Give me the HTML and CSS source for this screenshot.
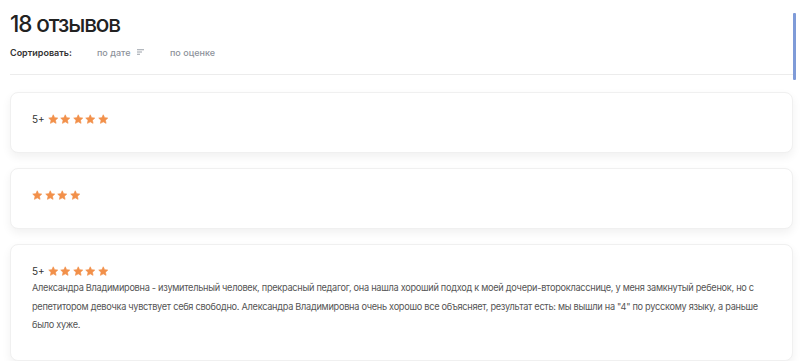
FILE: index.html
```html
<!DOCTYPE html>
<html lang="ru">
<head>
<meta charset="utf-8">
<link rel="stylesheet" href="styles.css">
</head>
<body>
<div class="page">
  <h1 class="title">18 отзывов</h1>
  <div class="sort">
    <span class="sort-label">Сортировать:</span>
    <span class="sort-opt sort-date">по дате
      <svg class="sort-icon" width="7" height="6" viewBox="0 0 7 6"><path d="M0 0.75H7M0 3H5M0 5.25H3" stroke="#9aa0a8" stroke-width="1"/></svg>
    </span>
    <span class="sort-opt">по оценке</span>
  </div>
  <div class="divider"></div>
  <div class="reviews">
    <div class="card">
      <div class="rating"><span class="grade">5+</span><span class="stars" data-n="5"></span></div>
    </div>
    <div class="card">
      <div class="rating"><span class="stars" data-n="4"></span></div>
    </div>
    <div class="card">
      <div class="rating"><span class="grade">5+</span><span class="stars" data-n="5"></span></div>
      <p class="text">Александра Владимировна - изумительный человек, прекрасный педагог, она нашла хороший подход к моей дочери-второкласснице, у меня замкнутый ребенок, но с репетитором девочка чувствует себя свободно. Александра Владимировна очень хорошо все объясняет, результат есть: мы вышли на "4" по русскому языку, а раньше было хуже.</p>
    </div>
  </div>
</div>
<div class="scrollbar"></div>
<script>
document.querySelectorAll('.stars').forEach(function(s){
  var n = +s.dataset.n, h = '';
  for (var i = 0; i < n; i++) h += '<svg class="star" width="10.5" height="10.5" viewBox="0 0 24 24"><path d="M12 1.8l3.1 6.6 7.2.9-5.3 5 1.4 7.1L12 17.9l-6.4 3.5 1.4-7.1-5.3-5 7.2-.9z" fill="#f2904a" stroke="#f2904a" stroke-width="1.5" stroke-linejoin="round"/></svg>';
  s.innerHTML = h;
});
</script>
</body>
</html>
```
FILE: styles.css
```css
* { box-sizing: border-box; }
html, body { margin: 0; padding: 0; background: #fff; }
body { font-family: Inter, "Noto Sans", sans-serif; color: #333; }
.page { padding: 9px 7px 0 10px; }
.title {
  margin: 0;
  font-size: 22.5px;
  font-weight: 500;
  line-height: 30px;
  color: #222;
  letter-spacing: -1.1px;
}
.sort {
  display: flex;
  align-items: center;
  height: 16px;
  margin-top: 5px;
  font-size: 9px;
}
.sort-label { font-weight: 600; color: #333; width: 87px; }
.sort-opt { color: #8d929b; font-weight: 500; display: flex; align-items: center; }
.sort-date { width: 73px; }
.sort-icon { margin-left: 6px; }
.divider { height: 1px; background: #ececec; margin-top: 14px; }
.reviews {
  display: flex;
  flex-direction: column;
  gap: 15px;
  margin-top: 17px;
}
.card {
  background: #fff;
  border: 1px solid #f0f0f0;
  border-radius: 8px;
  box-shadow: 0 4px 10px rgba(0,0,0,0.06);
  padding: 18px 21px 25px;
}
.rating {
  display: flex;
  align-items: center;
  height: 16px;
}
.grade { font-size: 10px; color: #333; margin-right: 3px; }
.stars { display: flex; gap: 2px; }
.star { display: block; }
.text {
  margin: 0;
  font-size: 9.2px;
  letter-spacing: -0.28px;
  line-height: 18.5px;
  color: #555;
}
.scrollbar {
  position: fixed;
  top: 13px;
  right: 4px;
  width: 3px;
  height: 67px;
  background: #7f9bd8;
  border-radius: 1px;
}
```
